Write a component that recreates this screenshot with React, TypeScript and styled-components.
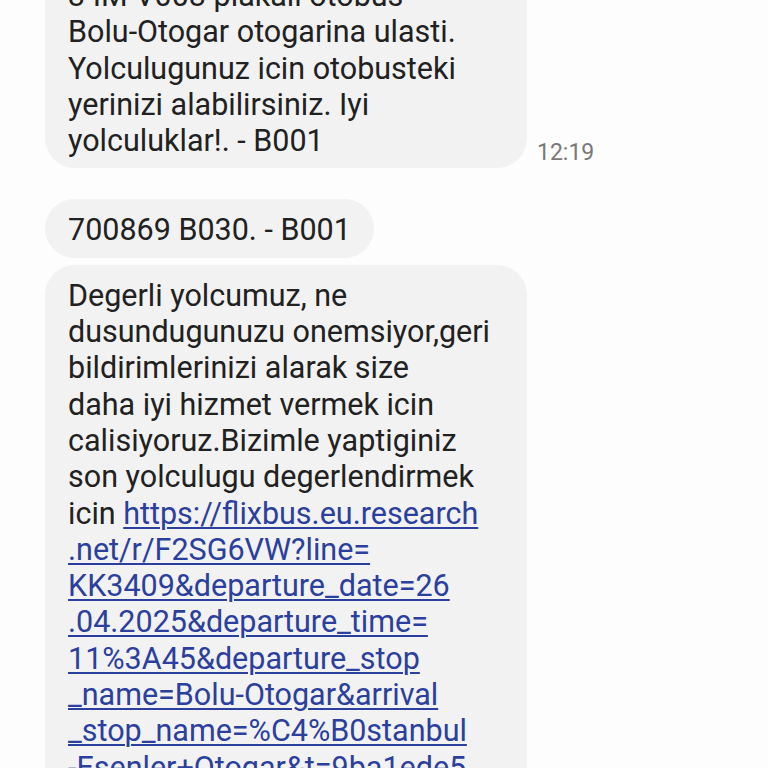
import React from 'react';
import styled, { createGlobalStyle } from 'styled-components';

const GlobalStyle = createGlobalStyle`
  html, body {
    margin: 0;
    padding: 0;
    background: #fdfdfd;
    overflow: hidden;
  }
`;

const Thread = styled.div`
  height: 768px;
  overflow: hidden;
  font-family: Roboto, 'Noto Sans', sans-serif;
`;

const Messages = styled.div`
  display: flex;
  flex-direction: column;
  padding-left: 45px;
  margin-top: -35px;
`;

const Row = styled.div<{ $gap: number }>`
  display: flex;
  align-items: flex-end;
  gap: 10px;
  margin-bottom: ${(p) => p.$gap}px;
`;

const Bubble = styled.div<{ $wide?: boolean }>`
  background: #f2f2f2;
  border-radius: 30px;
  padding: 13px 23px 9px;
  width: ${(p) => (p.$wide ? '482px' : 'auto')};
  box-sizing: border-box;
  color: #212121;
  font-size: 30.5px;
  line-height: 36.3px;
`;

const Line = styled.div`
  white-space: nowrap;
`;

const Link = styled.span`
  color: #2b3f9e;
  text-decoration: underline;
  text-decoration-thickness: 1.5px;
  text-underline-offset: 3px;
`;

const Time = styled.span`
  color: #787878;
  font-size: 23px;
  padding-bottom: 2px;
`;

const firstMessage = [
  '3 IM V003 plakali otobus',
  'Bolu-Otogar otogarina ulasti.',
  'Yolculugunuz icin otobusteki',
  'yerinizi alabilirsiniz. Iyi',
  'yolculuklar!. - B001',
];

const surveyText = [
  'Degerli yolcumuz, ne',
  'dusundugunuzu onemsiyor,geri',
  'bildirimlerinizi alarak size',
  'daha iyi hizmet vermek icin',
  'calisiyoruz.Bizimle yaptiginiz',
  'son yolculugu degerlendirmek',
];

const surveyLink = [
  '.net/r/F2SG6VW?line=',
  'KK3409&departure_date=26',
  '.04.2025&departure_time=',
  '11%3A45&departure_stop',
  '_name=Bolu-Otogar&arrival',
  '_stop_name=%C4%B0stanbul',
  '-Esenler+Otogar&t=9ba1ede5',
];

const App: React.FC = () => (
  <>
    <GlobalStyle />
    <Thread>
      <Messages>
        <Row $gap={31}>
          <Bubble $wide>
            {firstMessage.map((line) => (
              <Line key={line}>{line}</Line>
            ))}
          </Bubble>
          <Time>12:19</Time>
        </Row>
        <Row $gap={7}>
          <Bubble>
            <Line>700869 B030. - B001</Line>
          </Bubble>
        </Row>
        <Row $gap={0}>
          <Bubble $wide>
            {surveyText.map((line) => (
              <Line key={line}>{line}</Line>
            ))}
            <Line>
              icin <Link>https://flixbus.eu.research</Link>
            </Line>
            {surveyLink.map((line) => (
              <Line key={line}>
                <Link>{line}</Link>
              </Line>
            ))}
            <Line>
              <Link>e3c</Link>
            </Line>
          </Bubble>
        </Row>
      </Messages>
    </Thread>
  </>
);

export default App;
